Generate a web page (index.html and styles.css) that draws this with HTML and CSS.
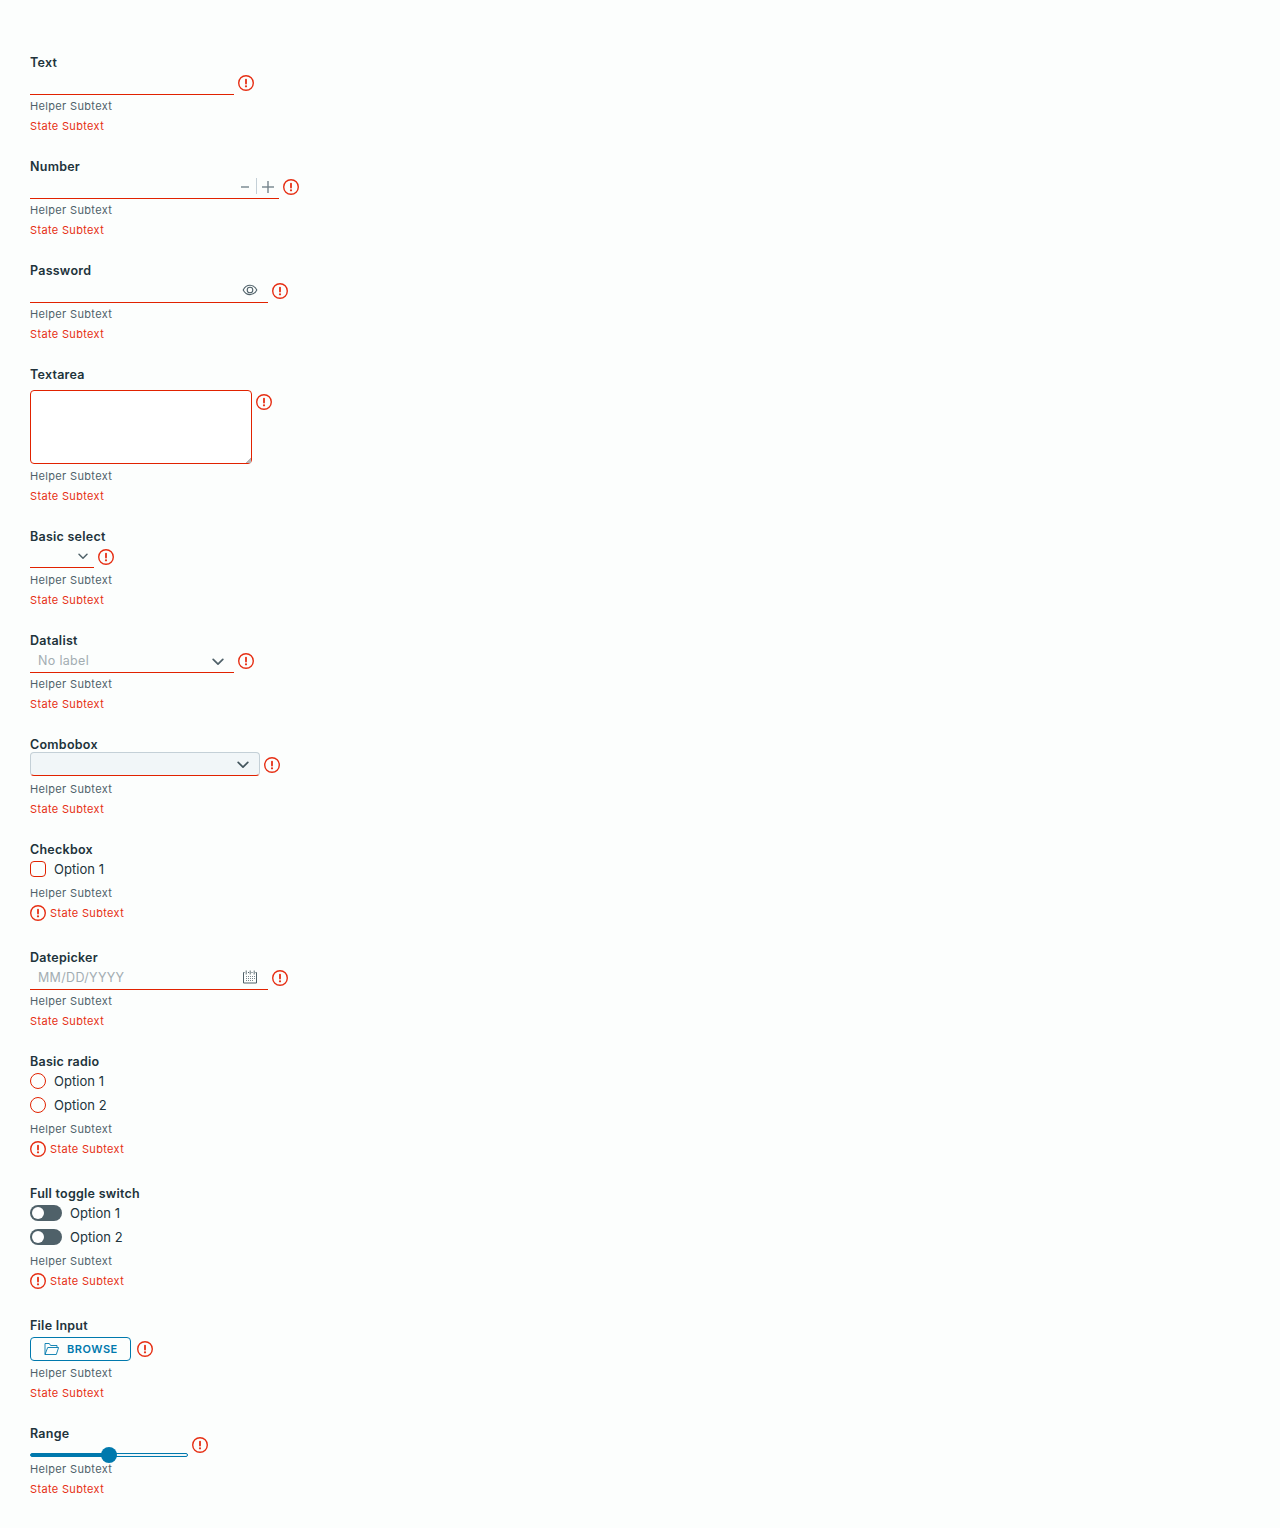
FILE: index.html
```
<!DOCTYPE html>
<html lang="en">
<head>
<meta charset="utf-8">
<title>Form controls: error state</title>
<link rel="stylesheet" href="styles.css">
</head>
<body>
<svg width="0" height="0" class="defs" aria-hidden="true">
  <symbol id="error" viewBox="0 0 16 16"><circle cx="8" cy="8" r="7.3" fill="none" stroke="currentColor" stroke-width="1.4"/><path d="M8 4.6v4" stroke="currentColor" stroke-width="1.8" stroke-linecap="round"/><circle cx="8" cy="11.3" r="1.1" fill="currentColor"/></symbol>
  <symbol id="angle" viewBox="0 0 12 8"><path d="M1.2 1.4L6 6.2l4.8-4.8" fill="none" stroke="currentColor" stroke-width="1.7" stroke-linecap="round" stroke-linejoin="round"/></symbol>
</svg>
<form class="form">
  <div class="field">
    <label class="label">Text</label>
    <div class="row"><div class="input w-text"></div><svg class="error"><use href="#error"/></svg></div>
    <span class="helper">Helper Subtext</span><span class="state">State Subtext</span>
  </div>
  <div class="field">
    <label class="label">Number</label>
    <div class="row"><div class="input w-number"><svg class="stepper" viewBox="0 0 36 16"><path d="M1 9h8" stroke="#75848b" stroke-width="1.4"/><path d="M16.5 0v16" stroke="#c4d0d7"/><path d="M22 9h12" stroke="#75848b" stroke-width="1.4"/><path d="M28 3v12" stroke="#75848b" stroke-width="1.4"/></svg></div><svg class="error"><use href="#error"/></svg></div>
    <span class="helper">Helper Subtext</span><span class="state">State Subtext</span>
  </div>
  <div class="field">
    <label class="label">Password</label>
    <div class="row"><div class="input w-action"><svg class="action" viewBox="0 0 16 16"><path d="M1.2 8C4.4 1.6 11.6 1.6 14.8 8C11.6 14.2 4.4 14.2 1.2 8z" fill="none" stroke="currentColor" stroke-width="1.1"/><circle cx="8" cy="8" r="2.8" fill="none" stroke="currentColor" stroke-width="1.1"/></svg></div><svg class="error"><use href="#error"/></svg></div>
    <span class="helper">Helper Subtext</span><span class="state">State Subtext</span>
  </div>
  <div class="field">
    <label class="label">Textarea</label>
    <div class="row row-area"><textarea class="area"></textarea><svg class="error"><use href="#error"/></svg></div>
    <span class="helper">Helper Subtext</span><span class="state">State Subtext</span>
  </div>
  <div class="field">
    <label class="label">Basic select</label>
    <div class="row row-select"><div class="input w-select"><svg class="angle-small"><use href="#angle"/></svg></div><svg class="error"><use href="#error"/></svg></div>
    <span class="helper">Helper Subtext</span><span class="state">State Subtext</span>
  </div>
  <div class="field">
    <label class="label">Datalist</label>
    <div class="row"><div class="input w-text"><span class="placeholder">No label</span><svg class="angle angle-low"><use href="#angle"/></svg></div><svg class="error"><use href="#error"/></svg></div>
    <span class="helper">Helper Subtext</span><span class="state">State Subtext</span>
  </div>
  <div class="field">
    <label class="label">Combobox</label>
    <div class="row row-combo"><div class="combo"><svg class="angle"><use href="#angle"/></svg></div><svg class="error"><use href="#error"/></svg></div>
    <span class="helper">Helper Subtext</span><span class="state">State Subtext</span>
  </div>
  <div class="field group">
    <span class="label">Checkbox</span>
    <label class="option"><span class="box"></span><span>Option 1</span></label>
    <span class="helper">Helper Subtext</span><span class="state"><svg class="error"><use href="#error"/></svg>State Subtext</span>
  </div>
  <div class="field">
    <label class="label">Datepicker</label>
    <div class="row"><div class="input w-action"><span class="placeholder">MM/DD/YYYY</span><svg class="action" viewBox="0 0 16 16"><path d="M2.5 3.5h-1v10.5h13v-10.5h-1M6 3.5h1M9.5 3.5h1" fill="none" stroke="currentColor"/><path d="M4.2 1.5v4M8.2 1.5v4M12.2 1.5v4" stroke="currentColor" stroke-width=".9"/><path d="M4 7.5h9M4 9.5h9M4 11.5h7" stroke="currentColor" stroke-dasharray="1 1" opacity=".75"/></svg></div><svg class="error"><use href="#error"/></svg></div>
    <span class="helper">Helper Subtext</span><span class="state">State Subtext</span>
  </div>
  <div class="field group">
    <span class="label">Basic radio</span>
    <label class="option"><span class="box radio"></span><span>Option 1</span></label>
    <label class="option"><span class="box radio"></span><span>Option 2</span></label>
    <span class="helper">Helper Subtext</span><span class="state"><svg class="error"><use href="#error"/></svg>State Subtext</span>
  </div>
  <div class="field group">
    <span class="label">Full toggle switch</span>
    <label class="option"><span class="toggle"></span><span>Option 1</span></label>
    <label class="option"><span class="toggle"></span><span>Option 2</span></label>
    <span class="helper">Helper Subtext</span><span class="state"><svg class="error"><use href="#error"/></svg>State Subtext</span>
  </div>
  <div class="field">
    <label class="label">File Input</label>
    <div class="row row-file"><button type="button" class="browse"><svg class="folder" viewBox="0 0 16 16"><path d="M2 13.5v-11h4.3l1.3 2h6.4v2M2 13.5h11.3l2.3-7H4.7z" fill="none" stroke="currentColor" stroke-width=".9" stroke-linejoin="round"/></svg><span>BROWSE</span></button><svg class="error"><use href="#error"/></svg></div>
    <span class="helper">Helper Subtext</span><span class="state">State Subtext</span>
  </div>
  <div class="field">
    <label class="label">Range</label>
    <div class="row row-range"><div class="range"><span class="track"></span><span class="thumb"></span></div><svg class="error"><use href="#error"/></svg></div>
    <span class="helper">Helper Subtext</span><span class="state">State Subtext</span>
  </div>
</form>
</body>
</html>
```
FILE: styles.css
```
* { box-sizing: border-box; }
body {
  margin: 0;
  background: #fcfefd;
  color: #21333b;
  font: 13px/16px Metropolis, Inter, sans-serif;
}
svg { display: block; flex: none; }
.defs { position: absolute; }
.form {
  display: flex;
  flex-direction: column;
  gap: 23px;
  padding: 55px 30px 29px;
}
.field {
  display: flex;
  flex-direction: column;
  align-items: flex-start;
  white-space: nowrap;
}
.group { margin-bottom: 4px; }
.label { height: 16px; font-size: 12.5px; line-height: 15px; font-weight: 600; letter-spacing: .25px; }
.row { display: flex; align-items: center; gap: 4px; height: 24px; margin-bottom: 1px; }
.error { width: 16px; height: 16px; color: #e62f14; }
.input {
  display: flex;
  align-items: center;
  height: 24px;
  border-bottom: 1px solid #e12200;
  color: #4f6169;
}
.w-text { width: 204px; padding: 0 10px 0 8px; }
.w-number { width: 249px; justify-content: flex-end; padding-right: 3px; }
.w-action { width: 238px; padding: 0 10px 0 8px; }
.w-select { width: 64px; height: 23px; justify-content: flex-end; padding-right: 6px; }
.stepper { width: 36px; height: 16px; margin-top: -1px; }
.action { width: 16px; height: 16px; margin: -1px 0 0 auto; }
.angle { width: 12px; height: 8px; margin-left: auto; margin-top: 1px; }
.angle-low { margin-top: 3px; }
.angle-small { width: 10px; height: 7px; }
.placeholder { color: #a3adb2; font-size: 12.5px; letter-spacing: .33px; }
.helper, .state { font-size: 11px; line-height: 20px; height: 20px; letter-spacing: .34px; }
.helper { color: #4f6169; }
.state { display: flex; align-items: center; gap: 4px; color: #e62f14; }
.row-area { height: 74px; margin: 7px 0 2px; align-items: flex-start; }
.row-area .error { margin-top: 4px; }
.area {
  width: 222px;
  height: 74px;
  margin: 0;
  border: 1px solid #e12200;
  border-radius: 4px;
  background: #fff;
}
.area::-webkit-resizer {
  background: linear-gradient(135deg, transparent 82%, #b5b5b5 82%);
}
.row-select { align-items: flex-start; }
.row-select .error { margin-top: 4px; }
.row-combo { margin: -1px 0 3px; }
.row-combo .error { margin-top: 1px; }
.combo {
  display: flex;
  align-items: center;
  width: 230px;
  height: 24px;
  padding-right: 10px;
  border: 1px solid #c4d0d7;
  border-bottom-color: #e12200;
  border-radius: 4px;
  background: #f1f6f8;
  color: #43555d;
}
.option { display: flex; align-items: center; gap: 8px; height: 24px; font-size: 13px; letter-spacing: .04px; }
.group .label + .option { margin-top: -1px; }
.group .helper { margin-top: 2px; }
.option .box, .option .toggle { margin-top: -1px; }
.box { width: 16px; height: 16px; border: 1px solid #e12200; border-radius: 4px; }
.radio { border-radius: 50%; }
.toggle {
  display: flex;
  align-items: center;
  width: 32px;
  height: 16px;
  padding-left: 2px;
  border-radius: 8px;
  background: #4f6169;
}
.toggle::before { content: ""; width: 12px; height: 12px; border-radius: 50%; background: #fff; }
.row-file { margin: 3px 0 2px; gap: 6px; }
.browse {
  display: flex;
  align-items: center;
  gap: 8px;
  width: 101px;
  height: 24px;
  padding: 0 0 0 12px;
  border: 1px solid #0079ad;
  border-radius: 4px;
  background: transparent;
  color: #0079ad;
  font: 600 11px/16px Metropolis, Inter, sans-serif;
  letter-spacing: .5px;
}
.folder { width: 16px; height: 16px; }
.row-range { height: 17px; margin: 0; align-items: flex-start; }
.row-range .error { margin-top: -5px; }
.range { display: grid; align-items: center; width: 158px; height: 16px; margin-top: 5px; }
.track, .thumb { grid-area: 1 / 1; }
.track {
  height: 4px;
  border: 1px solid #0079ad;
  border-radius: 2px;
  background: linear-gradient(to right, #0079ad 50%, #f1f6f8 50%);
}
.thumb { width: 16px; height: 16px; justify-self: center; border-radius: 50%; background: #0079ad; }
```
